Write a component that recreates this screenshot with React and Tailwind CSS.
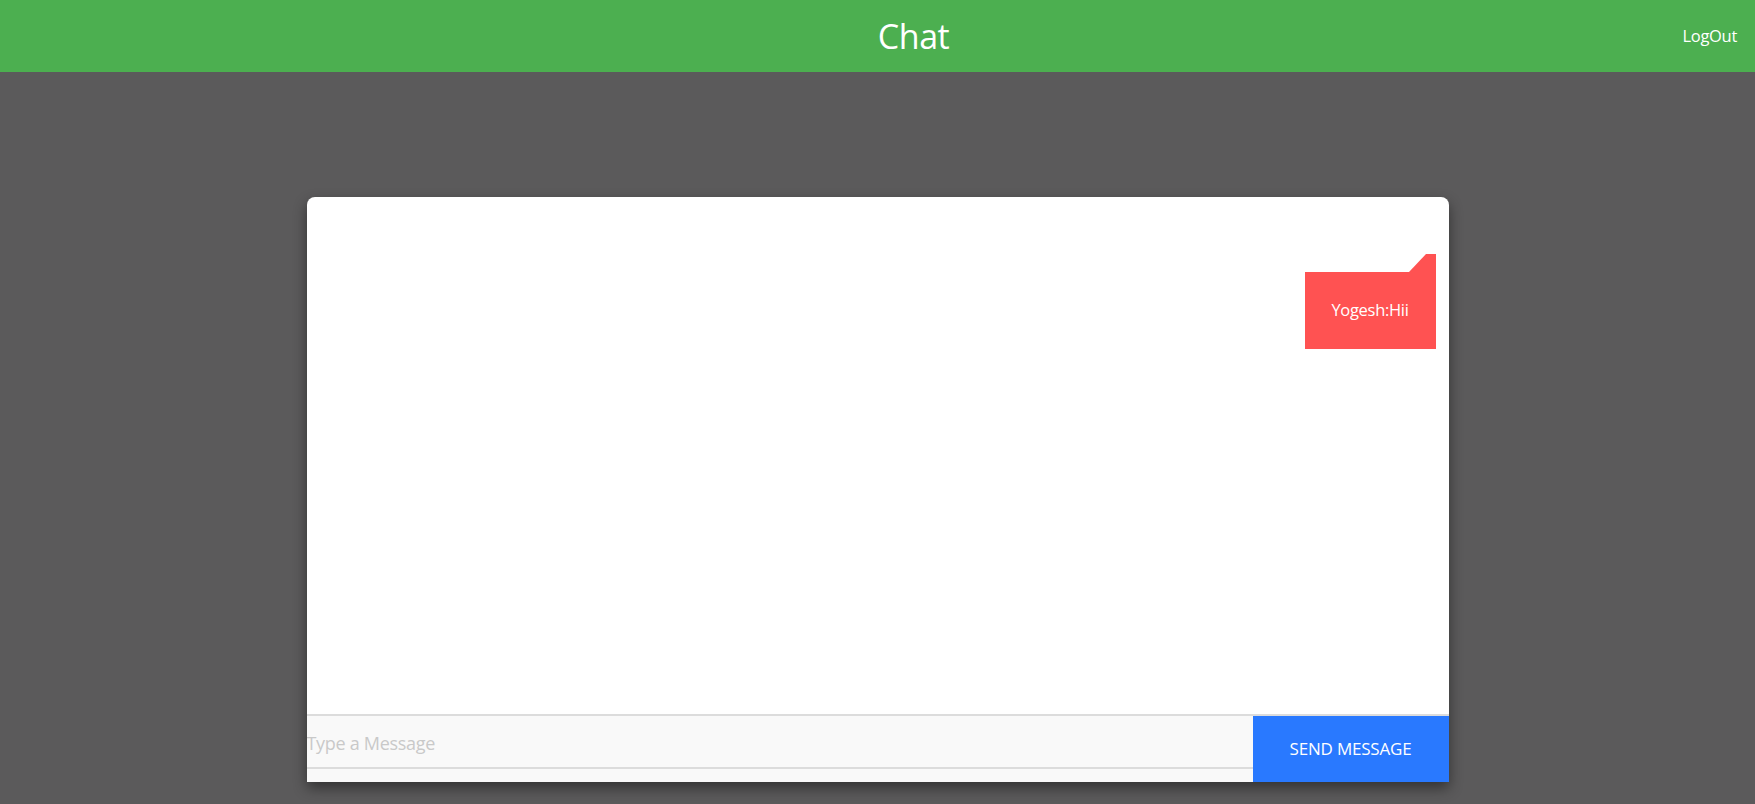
export default function App() {
  return (
    <div
      className="min-h-screen w-full bg-[#5b5a5b] flex flex-col"
      style={{ fontFamily: '"Open Sans", "Noto Sans", sans-serif' }}
    >
      <header className="h-[72px] bg-[#4caf50] grid grid-cols-3 items-center">
        <div />
        <h1 className="justify-self-center ml-[72px] text-white text-[34px] leading-none font-normal tracking-[-0.5px]">Chat</h1>
        <button className="justify-self-end pr-[18px] text-white text-[16.5px] leading-none tracking-[-0.3px]">LogOut</button>
      </header>

      <main className="flex-1 flex justify-center pt-[125px]">
        <div className="w-[1142px] h-[585px] bg-white rounded-t-lg shadow-[0_6px_14px_rgba(0,0,0,0.45)] flex flex-col">
          <div className="h-[517px] flex flex-col items-end pt-[57px] pr-[13px]">
            <div className="w-[131px] flex flex-col">
              <svg width="131" height="18" viewBox="0 0 131 18" className="block">
                <polygon points="104,18 121,0 131,0 131,18" fill="#ff5252" />
              </svg>
              <div className="h-[77px] bg-[#ff5252] flex items-center justify-center text-white text-[16.5px] tracking-[-0.3px]">
                Yogesh:Hii
              </div>
            </div>
          </div>
          <div className="flex-1 flex border-t-2 border-[#dcdcdc]">
            <div className="flex-1 flex flex-col bg-[#f9f9f9]">
              <input
                className="h-[53px] w-full pt-[3px] bg-[#f9f9f9] border-b-2 border-[#dcdcdc] outline-none text-[18px] text-[#333] placeholder:text-[#c9c9c9] tracking-[-0.3px]"
                placeholder="Type a Message"
              />
            </div>
            <button className="w-[196px] bg-[#2979ff] text-white text-[17px] tracking-[-0.2px] flex items-center justify-center pb-[1px]">
              SEND MESSAGE
            </button>
          </div>
        </div>
      </main>
    </div>
  );
}
